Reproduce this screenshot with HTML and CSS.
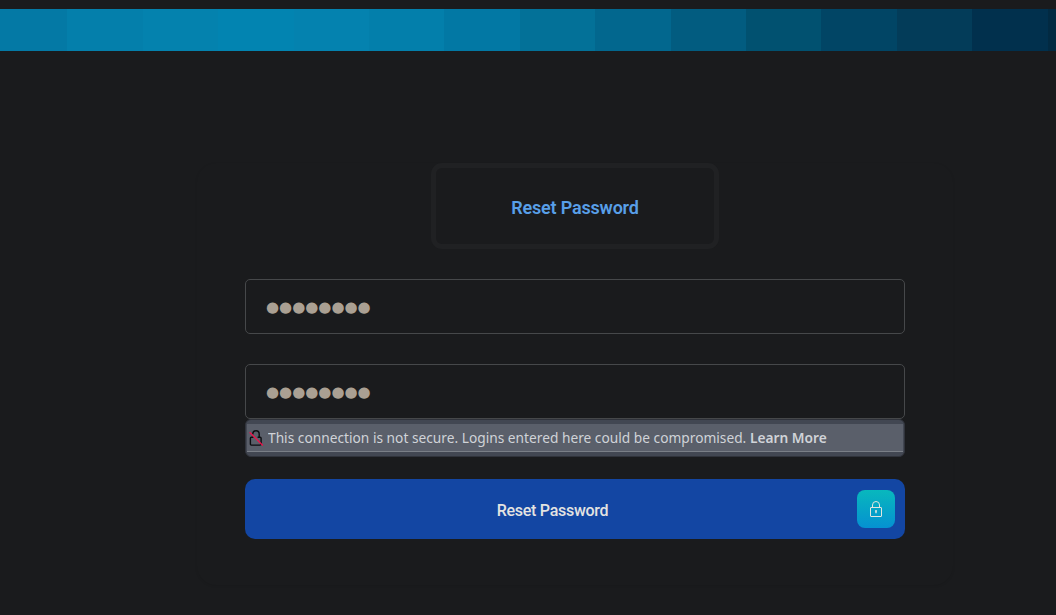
FILE: index.html
```
<!DOCTYPE html>
<html lang="en">
<head>
<meta charset="utf-8">
<title>Reset Password</title>
<link rel="stylesheet" href="styles.css">
</head>
<body>
<div class="banner"><i class="c1"></i><i class="c2"></i><i class="c3"></i><i class="c4"></i><i class="c5"></i><i class="c6"></i><i class="c7"></i><i class="c8"></i><i class="c9"></i><i class="c10"></i><i class="c11"></i><i class="c12"></i><i class="c13"></i><i class="c14"></i><i class="c15"></i></div>
<main class="card">
  <h1 class="title"><span>Reset Password</span></h1>
  <div class="field">●●●●●●●●</div>
  <div class="field second">●●●●●●●●</div>
  <div class="warning">
    <div class="warning-row">
      <svg class="insecure" width="16" height="18" viewBox="0 0 16 18" fill="none">
        <path d="M4.8 5.6V5a3.2 3.2 0 0 1 6.4 0V8M13.1 9v6.1q0 1-1 1H3.4q-1 0-1-1V9.2q0-1 1-1h2M9.6 8.2h2.5q1 0 1 1" stroke="#0c0d10" stroke-width="1.4"/>
        <path d="M1.6 3.2 14.8 16.4" stroke="#e9134a" stroke-width="1.4"/>
      </svg>
      <p class="message">This connection is not secure. Logins entered here could be compromised. <b>Learn More</b></p>
    </div>
  </div>
  <button class="submit" type="button">
    <span class="label">Reset Password</span>
    <span class="badge">
      <svg width="14" height="18" viewBox="0 0 14 18" fill="none" stroke="#e2e5df" stroke-width="1">
        <rect x="1.5" y="7.5" width="11" height="9" rx=".5"/>
        <path d="M3.5 7.5V5a3.5 3.5 0 0 1 7 0v2.5"/>
        <path d="M7 10.2v3M6 10.9h2" stroke-width="1.4"/>
      </svg>
    </span>
  </button>
</main>
</body>
</html>
```
FILE: styles.css
```
* { box-sizing: border-box; }
body {
  margin: 0;
  padding-top: 9px;
  height: 615px;
  overflow: hidden;
  background: #1a1b1d;
  font-family: Roboto, sans-serif;
}
.banner {
  display: grid;
  grid-template-columns: 67px 76px 75px 76px 75px 75px 76px 75px 76px 75px 75px 76px 75px 76px 8px;
  height: 42px;
}
.c1 { background: #0479a5; }
.c2 { background: #047fab; }
.c3 { background: #0482ae; }
.c4 { background: #0284b1; }
.c5 { background: #0482af; }
.c6 { background: #037fab; }
.c7 { background: #0278a4; }
.c8 { background: #037198; }
.c9 { background: #02678e; }
.c10 { background: #025c80; }
.c11 { background: #015170; }
.c12 { background: #014565; }
.c13 { background: #033c59; }
.c14 { background: #01304d; }
.c15 { background: #022a42; }
.card {
  display: flex;
  flex-direction: column;
  width: 756px;
  height: 422px;
  margin: 112px 0 0 197px;
  padding: 0 48px;
  border-radius: 20px;
  box-shadow: 0 1px 3px rgba(0, 0, 0, .09);
}
.title {
  display: flex;
  flex: none;
  align-items: center;
  justify-content: center;
  align-self: center;
  width: 288px;
  height: 86px;
  margin: 0 0 30px;
  border: 5px solid #202123;
  border-radius: 11px;
  color: #589fe8;
  font-size: 18px;
  font-weight: 600;
  letter-spacing: -.2px;
  line-height: 24px;
  padding-top: 4px;
}
.field {
  flex: none;
  width: 660px;
  height: 55px;
  padding: 1px 20px 0;
  border: 1px solid #46484a;
  border-radius: 5px;
  color: #aaa093;
  font: 15px/53px "DejaVu Sans", sans-serif;
}
.second { margin-top: 30px; }
.warning {
  flex: none;
  width: 660px;
  height: 38px;
  padding: 4px 1px 5px;
  border: 1px solid #30333b;
  border-radius: 6px;
  background: #424752;
}
.warning-row {
  display: flex;
  align-items: center;
  height: 28px;
  padding-left: 1px;
  border-bottom: 1px solid #7a7f87;
  background: #5a5f6a;
}
.insecure { flex: none; }
.message {
  margin: -2px 0 0 4px;
  color: #d0d3d8;
  font: 14.67px/22px "Noto Sans", sans-serif;
  white-space: nowrap;
  transform: scaleX(.937);
  transform-origin: left center;
}
.message b { font-weight: 600; }
.submit {
  display: flex;
  flex: none;
  align-items: center;
  width: 660px;
  height: 60px;
  margin: 22px 0 0;
  padding: 0 10px 0 0;
  border: 0;
  border-radius: 10px;
  background: #1346a3;
  color: #e4e3e1;
  font: 500 16px/24px Roboto, sans-serif;
  letter-spacing: -.27px;
}
.label { flex: 1; padding: 4px 0 0 3px; }
.badge {
  display: flex;
  align-items: center;
  justify-content: center;
  width: 38px;
  height: 38px;
  border-radius: 8px;
  background: linear-gradient(#08b8bd, #0591d1);
}
```
